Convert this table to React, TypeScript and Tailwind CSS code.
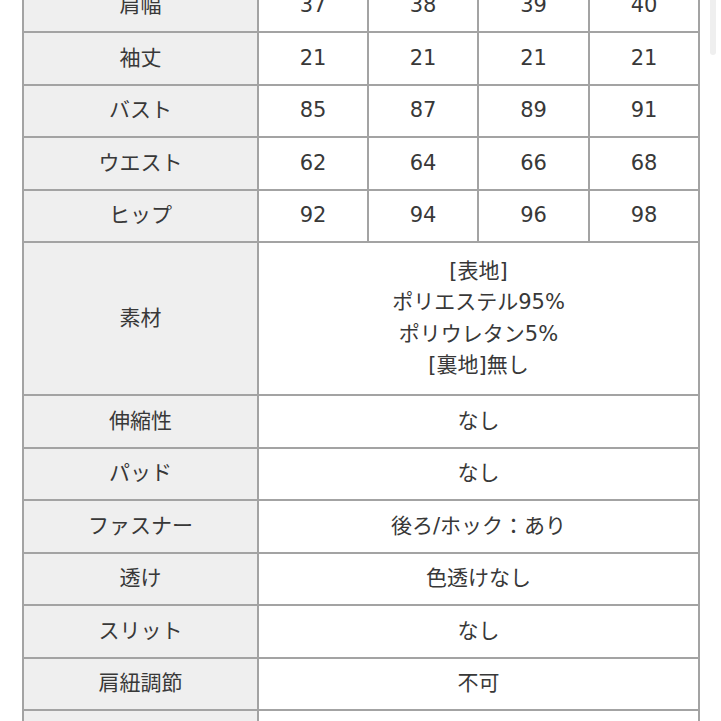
const FONT = "font-['DejaVu_Sans','Noto_Sans_CJK_JP',sans-serif]";

const SIZES: [string, string[]][] = [
  ["肩幅", ["37", "38", "39", "40"]],
  ["袖丈", ["21", "21", "21", "21"]],
  ["バスト", ["85", "87", "89", "91"]],
  ["ウエスト", ["62", "64", "66", "68"]],
  ["ヒップ", ["92", "94", "96", "98"]],
];

const DETAILS: [string, string][] = [
  ["伸縮性", "なし"],
  ["パッド", "なし"],
  ["ファスナー", "後ろ/ホック：あり"],
  ["透け", "色透けなし"],
  ["スリット", "なし"],
  ["肩紐調節", "不可"],
  ["", ""],
];

const Label = ({ children, tall }: { children: string; tall?: boolean }) => (
  <div
    className={`flex items-center justify-center bg-[#efefef] ${tall ? "h-[151px]" : "h-[50.5px]"}`}
  >
    {children}
  </div>
);

export default function App() {
  return (
    <div className={`relative h-[721px] w-[721px] overflow-hidden bg-white text-[21px] text-[#383838] ${FONT}`}>
      <div className="-mt-[21.5px] ml-[22px] grid w-[678px] grid-cols-[233px_108px_108px_109px_108px] gap-[2px] bg-[#a3a3a3] p-[2px]">
        {SIZES.map(([label, vals]) => (
          <div key={label} className="contents">
            <Label>{label}</Label>
            {vals.map((v, i) => (
              <div key={i} className="flex h-[50.5px] items-center justify-center bg-white">
                {v}
              </div>
            ))}
          </div>
        ))}

        <Label tall>素材</Label>
        <div className="col-span-4 flex h-[151px] flex-col items-center justify-center bg-white leading-[31.5px]">
          <span>[表地]</span>
          <span>ポリエステル95%</span>
          <span>ポリウレタン5%</span>
          <span>[裏地]無し</span>
        </div>

        {DETAILS.map(([label, val], i) => (
          <div key={i} className="contents">
            <Label>{label}</Label>
            <div className="col-span-4 flex h-[50.5px] items-center justify-center bg-white">
              {val}
            </div>
          </div>
        ))}
      </div>

      {/* scrollbar thumb */}
      <div className="absolute right-[5px] top-0 h-[55px] w-[6px] rounded-b-full bg-[#efefef]" />
    </div>
  );
}
